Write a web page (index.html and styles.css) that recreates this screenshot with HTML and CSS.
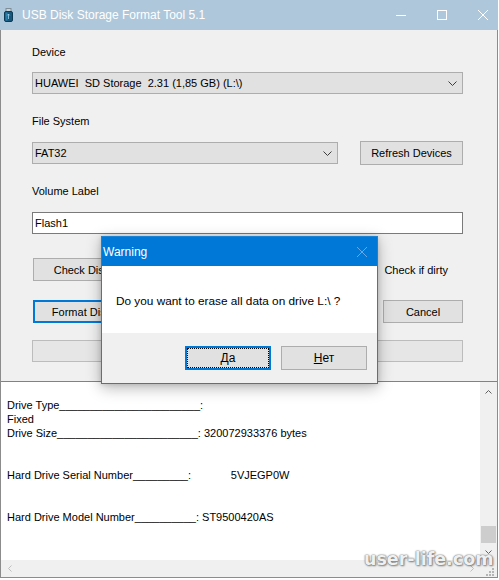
FILE: index.html
```html
<!DOCTYPE html>
<html lang="en">
<head>
<meta charset="utf-8">
<title>USB Disk Storage Format Tool 5.1</title>
<link rel="stylesheet" href="styles.css">
</head>
<body>
<div class="window">
  <div class="titlebar">
    <svg class="app-icon" width="9" height="14" viewBox="0 0 9 14">
      <rect x="2" y="0.5" width="5" height="4" fill="#c9d3da" stroke="#7f8d97"/>
      <rect x="0.5" y="3.5" width="8" height="10" rx="1.5" fill="#17577c" stroke="#0f3a54"/>
      <rect x="1.5" y="4.5" width="2" height="8" fill="#2c7eaa"/>
      <path d="M4.5 6v5M3.3 7.4l1.2-1.4 1.2 1.4" stroke="#9fd6f2" fill="none" stroke-width="0.8"/>
    </svg>
    <span class="title">USB Disk Storage Format Tool 5.1</span>
    <div class="controls">
      <svg width="10" height="10" viewBox="0 0 10 10"><path d="M0 5.5h10" stroke="#fff"/></svg>
      <svg width="10" height="10" viewBox="0 0 10 10"><rect x="0.5" y="0.5" width="9" height="9" fill="none" stroke="#fff"/></svg>
      <svg width="10" height="10" viewBox="0 0 10 10"><path d="M0 0L10 10M10 0L0 10" stroke="#fff"/></svg>
    </div>
  </div>

  <div class="client">
    <div class="form">
      <div class="label">Device</div>
      <div class="combo device-combo">
        <span>HUAWEI&nbsp; SD Storage&nbsp; 2.31 (1,85 GB) (L:\)</span>
        <svg class="chev" width="9" height="5" viewBox="0 0 9 5"><polyline points="0.5,0.5 4.5,4.5 8.5,0.5" fill="none" stroke="#3c3c3c"/></svg>
      </div>

      <div class="label fs-label">File System</div>
      <div class="row fs-row">
        <div class="combo fs-combo">
          <span>FAT32</span>
          <svg class="chev" width="9" height="5" viewBox="0 0 9 5"><polyline points="0.5,0.5 4.5,4.5 8.5,0.5" fill="none" stroke="#3c3c3c"/></svg>
        </div>
        <button class="btn refresh-btn">Refresh Devices</button>
      </div>

      <div class="label vol-label">Volume Label</div>
      <div class="textbox">Flash1</div>

      <div class="row check-row">
        <button class="btn action-btn">Check Disk</button>
        <div class="check"><span class="check-box"></span><span>Check if dirty</span></div>
      </div>

      <div class="row format-row">
        <button class="btn action-btn focused">Format Disk</button>
        <button class="btn cancel-btn">Cancel</button>
      </div>

      <div class="progress"></div>
    </div>

    <div class="log">
      <div class="log-main">
        <div class="log-text">
          <div class="line"> </div>
          <div class="line">Drive Type_______________________:</div>
          <div class="line">Fixed</div>
          <div class="line">Drive Size_______________________: 320072933376 bytes</div>
          <div class="line"> </div>
          <div class="line"> </div>
          <div class="line">Hard Drive Serial Number_________:             5VJEGP0W</div>
          <div class="line"> </div>
          <div class="line"> </div>
          <div class="line">Hard Drive Model Number__________: ST9500420AS</div>
        </div>
        <div class="vscroll">
          <div class="sb-btn up"><svg width="7" height="4" viewBox="0 0 7 4"><polyline points="0.5,3.5 3.5,0.5 6.5,3.5" fill="none" stroke="#606060"/></svg></div>
          <div class="vtrack"><div class="thumb"></div></div>
          <div class="sb-btn"><svg width="7" height="4" viewBox="0 0 7 4"><polyline points="0.5,0.5 3.5,3.5 6.5,0.5" fill="none" stroke="#606060"/></svg></div>
        </div>
      </div>
      <div class="hscroll-row">
        <div class="hscroll">
          <div class="sb-btn"><svg width="4" height="7" viewBox="0 0 4 7"><polyline points="3.5,0.5 0.5,3.5 3.5,6.5" fill="none" stroke="#bfbfbf"/></svg></div>
          <div class="sb-btn"><svg width="4" height="7" viewBox="0 0 4 7"><polyline points="0.5,0.5 3.5,3.5 0.5,6.5" fill="none" stroke="#bfbfbf"/></svg></div>
        </div>
        <div class="grip">
          <svg width="17" height="17" viewBox="0 0 17 17" fill="#b5b5b5">
            <rect x="12" y="8" width="2" height="2"/>
            <rect x="9" y="11" width="2" height="2"/><rect x="12" y="11" width="2" height="2"/>
            <rect x="6" y="14" width="2" height="2"/><rect x="9" y="14" width="2" height="2"/><rect x="12" y="14" width="2" height="2"/>
          </svg>
        </div>
      </div>
    </div>
  </div>

  <div class="dialog">
    <div class="dlg-title">
      <span>Warning</span>
      <svg class="dlg-close" width="10" height="10" viewBox="0 0 10 10"><path d="M0 0L10 10M10 0L0 10" stroke="#66a9e6"/></svg>
    </div>
    <div class="dlg-body">Do you want to erase all data on drive L:\ ?</div>
    <div class="dlg-foot">
      <button class="dbtn default"><u>Д</u>а</button>
      <button class="dbtn"><u>Н</u>ет</button>
    </div>
  </div>

  <div class="watermark">user-life.com</div>
</div>
</body>
</html>
```

FILE: styles.css
```css
* { box-sizing: border-box; }

html, body {
  margin: 0;
  padding: 0;
  background: #ffffff;
}

body {
  font-family: "Liberation Sans", Arial, sans-serif;
  font-size: 11px;
  color: #000;
}

.window {
  position: relative;
  width: 498px;
  height: 578px;
  display: flex;
  flex-direction: column;
}

/* title bar */
.titlebar {
  flex: none;
  height: 30px;
  background: #afc7da;
  display: flex;
  align-items: center;
}

.app-icon {
  margin-left: 4px;
  flex: none;
}

.title {
  margin-left: 9px;
  color: #fff;
  font-size: 12px;
}

.controls {
  margin-left: auto;
  margin-right: 10px;
  display: flex;
  align-items: center;
  gap: 31px;
}

.controls svg { display: block; }

/* client area */
.client {
  flex: 1;
  display: flex;
  flex-direction: column;
  background: #f0f0f0;
  border: 1px solid #8c8c8c;
  border-top: none;
  min-height: 0;
}

.form {
  padding: 15px 34px 19px 31px;
}

.label {
  height: 14px;
  line-height: 14px;
}

.fs-label { margin-top: 20px; }
.vol-label { margin-top: 19px; }

.combo {
  height: 22px;
  border: 1px solid #adadad;
  background: #e1e1e1;
  display: flex;
  align-items: center;
  padding: 0 5px 0 2px;
  white-space: pre;
}

.combo .chev { margin-left: auto; display: block; }

.device-combo { margin-top: 13px; }

.row {
  display: flex;
  align-items: center;
}

.fs-row {
  margin-top: 13px;
  height: 24px;
  justify-content: space-between;
}

.fs-combo { width: 306px; }

.btn {
  font: inherit;
  color: #000;
  height: 23px;
  padding: 0;
  border: 1px solid #adadad;
  background: #e1e1e1;
  display: flex;
  align-items: center;
  justify-content: center;
}

.refresh-btn {
  width: 103px;
  height: 24px;
}

.textbox {
  margin-top: 14px;
  height: 22px;
  border: 1px solid #7a7a7a;
  background: #fff;
  line-height: 20px;
  padding-left: 2px;
}

.check-row {
  margin-top: 24px;
  height: 23px;
}

.action-btn {
  width: 97px;
  margin-left: 1px;
}

.action-btn.focused {
  border: 2px solid #0078d7;
}

.check {
  margin-left: auto;
  margin-right: 15px;
  display: flex;
  align-items: center;
  gap: 6px;
}

.check-box {
  width: 13px;
  height: 13px;
  border: 1px solid #333;
  background: #fff;
}

.format-row {
  margin-top: 19px;
  height: 23px;
  justify-content: space-between;
}

.cancel-btn { width: 80px; }

.progress {
  margin-top: 17px;
  height: 22px;
  border: 1px solid #bcbcbc;
  background: #e6e6e6;
}

/* log */
.log {
  flex: 1;
  display: flex;
  flex-direction: column;
  border-top: 1px solid #828282;
  background: #fff;
  min-height: 0;
}

.log-main {
  flex: 1;
  display: flex;
  min-height: 0;
}

.log-text {
  flex: 1;
  padding: 2px 0 0 6px;
  overflow: hidden;
}

.line {
  height: 14px;
  line-height: 14px;
  white-space: pre;
}

.vscroll {
  width: 17px;
  background: #f0f0f0;
  display: flex;
  flex-direction: column;
}

.sb-btn {
  width: 17px;
  height: 17px;
  display: flex;
  align-items: center;
  justify-content: center;
}

.sb-btn svg { display: block; }
.sb-btn.up { padding-top: 3px; }

.vtrack {
  flex: 1;
  display: flex;
  flex-direction: column;
  justify-content: flex-end;
  align-items: center;
}

.thumb {
  width: 15px;
  height: 17px;
  background: #cdcdcd;
}

.hscroll-row {
  flex: none;
  height: 17px;
  display: flex;
}

.hscroll {
  flex: 1;
  background: #f0f0f0;
  display: flex;
  justify-content: space-between;
  align-items: center;
}

.grip {
  width: 17px;
  background: #f0f0f0;
}

.grip svg { display: block; }

/* dialog */
.dialog {
  position: absolute;
  left: 101px;
  top: 236px;
  width: 277px;
  height: 148px;
  border: 1px solid #1a83d6;
  background: #fff;
  box-shadow: 0 4px 14px rgba(0, 0, 0, 0.28), 0 0 5px rgba(0, 0, 0, 0.15);
  display: flex;
  flex-direction: column;
  font-size: 11.8px;
}

.dlg-title {
  flex: none;
  height: 29px;
  background: #0078d7;
  color: #fff;
  display: flex;
  align-items: center;
  padding-left: 1px;
  font-size: 12px;
}

.dlg-close {
  margin-left: auto;
  margin-right: 10px;
  display: block;
}

.dlg-body {
  flex: none;
  height: 67px;
  padding: 27px 0 0 14px;
  line-height: 16px;
}

.dlg-foot {
  flex: 1;
  background: #f0f0f0;
  display: flex;
  justify-content: flex-end;
  gap: 10px;
  padding: 13px 10px 0 0;
}

.dbtn {
  position: relative;
  font: inherit;
  font-size: 12px;
  color: #000;
  width: 86px;
  height: 24px;
  padding: 0;
  border: 1px solid #adadad;
  background: #e1e1e1;
}

.dbtn.default {
  border: 2px solid #0078d7;
}

.dbtn.default::after {
  content: "";
  position: absolute;
  inset: 0;
  border: 1px dotted #000;
}

.dbtn u { text-decoration-thickness: 1px; }

/* watermark overlay */
.watermark {
  position: absolute;
  left: 364px;
  top: 548px;
  font-family: "DejaVu Sans", sans-serif;
  font-weight: bold;
  font-size: 17.5px;
  line-height: 22px;
  color: rgba(255, 255, 255, 0.92);
  text-shadow: 0 0 1px #666, 0 0 2px #888, 1px 1px 2px rgba(0, 0, 0, 0.45);
}
```
